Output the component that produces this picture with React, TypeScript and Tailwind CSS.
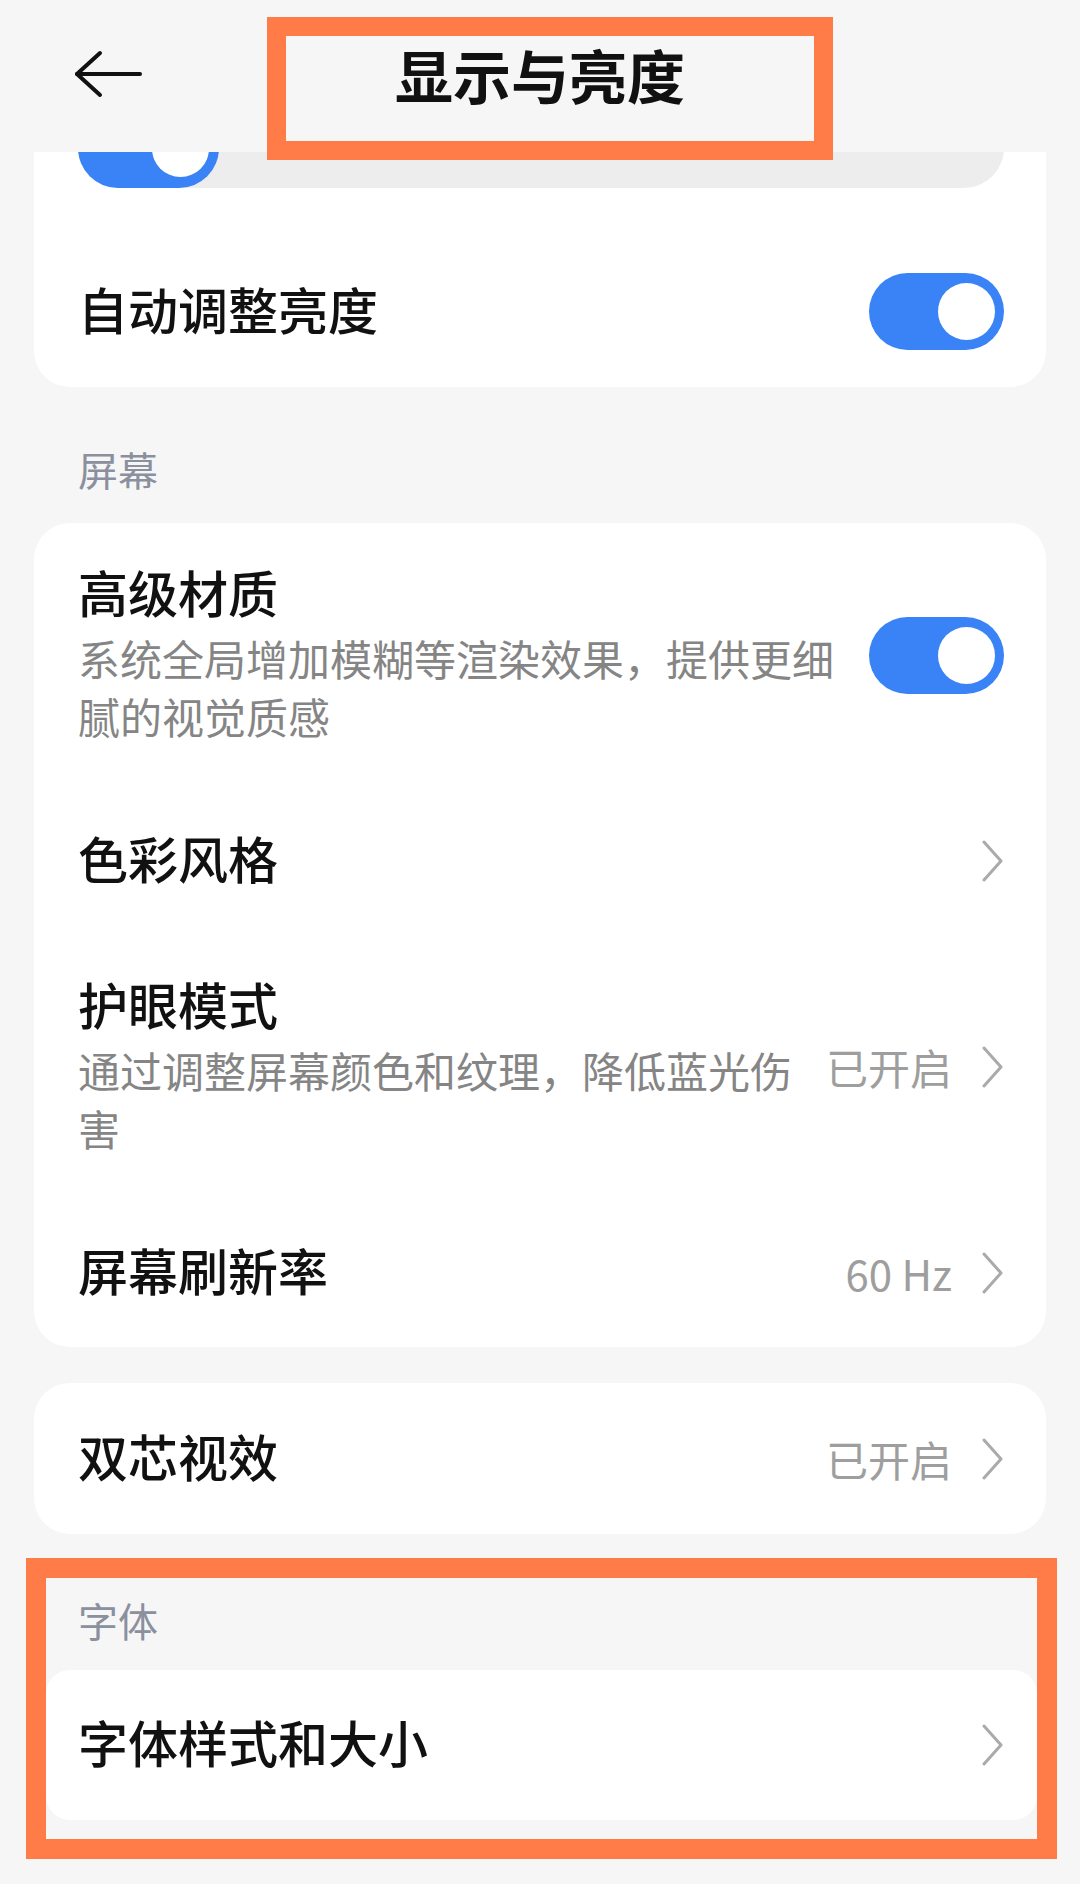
import type { ReactNode } from 'react';

const FONT = "font-['Noto_Sans_CJK_SC','Noto_Sans',sans-serif]";

function BackArrow() {
  return (
    <svg width="70" height="50" viewBox="0 0 70 50" fill="none" stroke="#111" strokeWidth="4" strokeLinecap="round" strokeLinejoin="round">
      <path d="M3 25H66" />
      <path d="M26 4L3 25L26 46" />
    </svg>
  );
}

function Chevron() {
  return (
    <svg width="24" height="42" viewBox="0 0 24 42" fill="none" stroke="#aaaaaa" strokeWidth="3" strokeLinecap="round" strokeLinejoin="round" className="shrink-0">
      <path d="M4 2L21 21L4 40" />
    </svg>
  );
}

function Toggle() {
  return (
    <div className="flex h-[77px] w-[135px] shrink-0 items-center justify-end rounded-full bg-[#3a83f7] pr-[9px]">
      <div className="h-[57px] w-[57px] rounded-full bg-white" />
    </div>
  );
}

// 右侧的值 + 箭头
function Value({ text }: { text?: string }) {
  return (
    <div className="flex shrink-0 items-center gap-[28px]">
      {text && <span className="text-[42px] leading-[58px] text-[#9e9e9e]">{text}</span>}
      <Chevron />
    </div>
  );
}

interface RowProps {
  title: string;
  desc?: string;
  right: ReactNode;
  className?: string;
}

function Row({ title, desc, right, className = '' }: RowProps) {
  return (
    <div className={`flex items-center gap-[24px] ${className}`}>
      <div className="min-w-0 flex-1">
        <div className="mb-[8px] text-[50px] font-medium leading-[52px] text-[#111]">{title}</div>
        {desc && <div className="mt-[12px] text-[42px] leading-[58px] text-[#858585]">{desc}</div>}
      </div>
      {right}
    </div>
  );
}

function SectionLabel({ children, className = '' }: { children: ReactNode; className?: string }) {
  return <div className={`text-[40px] leading-[48px] text-[#8b909e] ${className}`}>{children}</div>;
}

export default function App() {
  return (
    <div className={`relative min-h-[1884px] w-[1080px] overflow-hidden bg-[#f6f6f6] ${FONT}`}>
      {/* 顶栏 */}
      <header className="grid h-[152px] grid-cols-[1fr_auto_1fr]">
        <div className="pl-[74px] pt-[49px]">
          <BackArrow />
        </div>
        <h1 className="mt-[45px] text-[58px] font-bold leading-[58px] text-[#111]">显示与亮度</h1>
        <div />
      </header>

      {/* 标注框 */}
      <div className="pointer-events-none absolute left-[267px] top-[17px] z-10 h-[143px] w-[566px] border-[19px] border-[#ff7b47]" />

      {/* 亮度 */}
      <section className="mx-[34px] overflow-hidden rounded-b-[36px] bg-white pl-[44px] pr-[42px]">
        <div className="-mt-[44px] h-[80px] rounded-full bg-[#ededed]">
          <div className="flex h-full w-[141px] items-center justify-end rounded-full bg-[#3a83f7] pr-[10px]">
            <div className="h-[57px] w-[57px] rounded-full bg-white" />
          </div>
        </div>
        <Row title="自动调整亮度" right={<Toggle />} className="mt-[48px] h-[151px]" />
      </section>

      <SectionLabel className="ml-[78px] mt-[58px]">屏幕</SectionLabel>

      <section className="mx-[34px] mt-[30px] rounded-[36px] bg-white pl-[44px] pr-[42px]">
        <Row
          title="高级材质"
          desc="系统全局增加模糊等渲染效果，提供更细腻的视觉质感"
          right={<Toggle />}
          className="py-[42px]"
        />
        <Row title="色彩风格" right={<Value />} className="h-[148px]" />
        <Row
          title="护眼模式"
          desc="通过调整屏幕颜色和纹理，降低蓝光伤害"
          right={<Value text="已开启" />}
          className="py-[42px]"
        />
        <Row title="屏幕刷新率" right={<Value text="60 Hz" />} className="h-[148px]" />
      </section>

      <section className="mx-[34px] mt-[36px] rounded-[36px] bg-white pl-[44px] pr-[42px]">
        <Row title="双芯视效" right={<Value text="已开启" />} className="h-[151px]" />
      </section>

      {/* 字体（标注） */}
      <div className="ml-[26px] mr-[23px] mt-[24px] border-[20px] border-[#ff7b47] pb-[19px]">
        <SectionLabel className="pl-[32px] pt-[18px]">字体</SectionLabel>
        <div className="mt-[26px] rounded-[24px] bg-white pl-[32px] pr-[33px]">
          <Row title="字体样式和大小" right={<Value />} className="h-[150px]" />
        </div>
      </div>
    </div>
  );
}
